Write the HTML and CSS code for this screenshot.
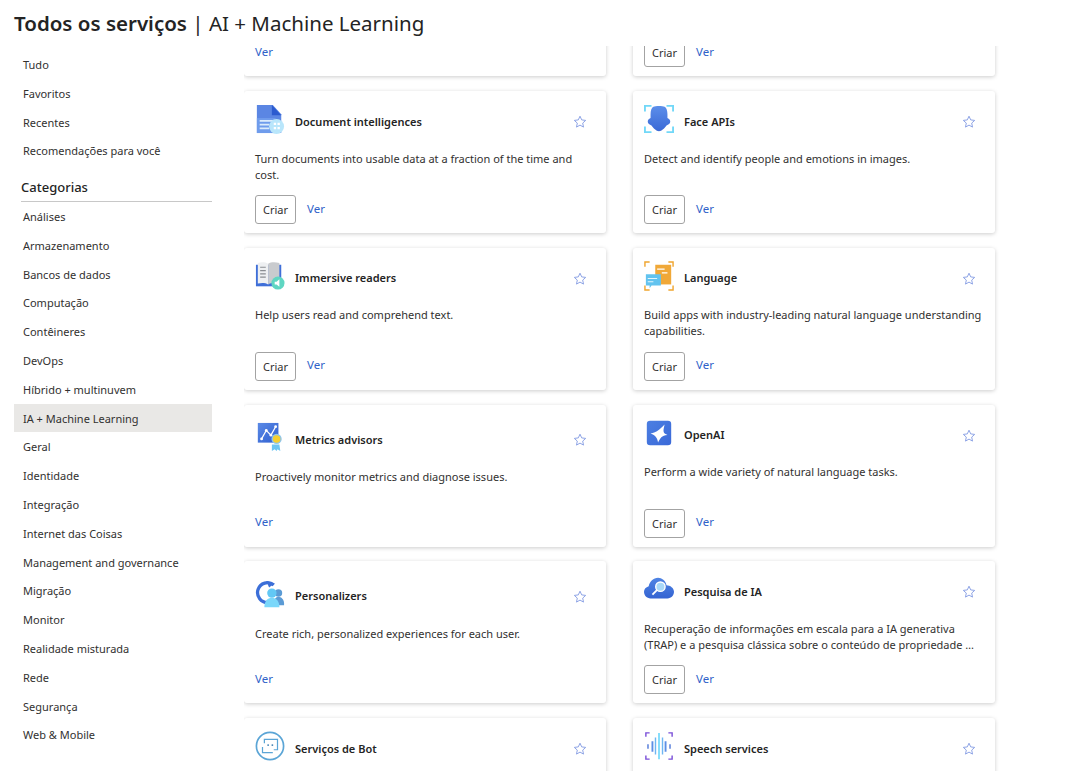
FILE: index.html
```html
<!DOCTYPE html>
<html lang="pt-BR">
<head>
    <meta charset="UTF-8">
    <meta name="viewport" content="width=device-width, initial-scale=1.0">
    <title>Todos os serviços | AI + Machine Learning</title>
    <link rel="stylesheet" href="styles.css">
</head>
<body>
<svg class="sprite" aria-hidden="true">
    <symbol id="star" viewBox="0 0 14 14">
        <path d="M7 1.2l1.7 3.7 4 .5-3 2.7.8 4L7 10.1l-3.500 2 .8-4-3-2.700 4-.5z" fill="none" stroke="currentColor" stroke-width="1"/>
    </symbol>
</svg>

<header class="page-title"><strong>Todos os serviços</strong> | AI + Machine Learning</header>

<div class="layout">
    <nav class="sidebar">
        <a class="nav-item">Tudo</a>
        <a class="nav-item">Favoritos</a>
        <a class="nav-item">Recentes</a>
        <a class="nav-item">Recomendações para você</a>
        <h2 class="nav-heading">Categorias</h2>
        <a class="nav-item">Análises</a>
        <a class="nav-item">Armazenamento</a>
        <a class="nav-item">Bancos de dados</a>
        <a class="nav-item">Computação</a>
        <a class="nav-item">Contêineres</a>
        <a class="nav-item">DevOps</a>
        <a class="nav-item">Híbrido + multinuvem</a>
        <a class="nav-item active">IA + Machine Learning</a>
        <a class="nav-item">Geral</a>
        <a class="nav-item">Identidade</a>
        <a class="nav-item">Integração</a>
        <a class="nav-item">Internet das Coisas</a>
        <a class="nav-item">Management and governance</a>
        <a class="nav-item">Migração</a>
        <a class="nav-item">Monitor</a>
        <a class="nav-item">Realidade misturada</a>
        <a class="nav-item">Rede</a>
        <a class="nav-item">Segurança</a>
        <a class="nav-item">Web &amp; Mobile</a>
    </nav>

    <main class="content">
        <div class="cards">
            <!-- primeira linha: rolada, so o rodape aparece -->
            <section class="card">
                <div class="actions"><a class="link">Ver</a></div>
            </section>
            <section class="card">
                <div class="actions"><button class="button">Criar</button><a class="link">Ver</a></div>
            </section>

            <section class="card">
                <div class="card-head">
                    <svg class="icon" viewBox="0 0 32 32">
                        <path d="M2 1h17l9 10v20H2z" fill="#5b86e3"/>
                        <path d="M18 1l10 11H18z" fill="#2c5bcf"/>
                        <path d="M2 15h20v16H2z" fill="#6f9cec"/>
                        <path d="M5 17h15v2H5zM5 21h10v2H5zM5 25h10v2H5z" fill="#dcebfb"/>
                        <circle cx="23" cy="24" r="8" fill="#b9e6fb"/>
                        <path d="M20 20h2.500v2.500H20zM24 20h2.500v2.500H24zM20 24.500h2.500V27H20zM24 24.500h2.500V27H24z" fill="#fff"/>
                    </svg>
                    <h3 class="card-name">Document intelligences</h3>
                    <svg class="star"><use href="#star"/></svg>
                </div>
                <p class="card-desc">Turn documents into usable data at a fraction of the time and cost.</p>
                <div class="actions"><button class="button">Criar</button><a class="link">Ver</a></div>
            </section>
            <section class="card">
                <div class="card-head">
                    <svg class="icon" viewBox="0 0 32 32">
                        <defs><linearGradient id="faceFill" x1="0" y1="0" x2="0" y2="1"><stop offset="0" stop-color="#5c8eea"/><stop offset="1" stop-color="#3a69d6"/></linearGradient></defs>
                        <path d="M1 8V2h7M24 2h7v6M1 24v6h7M24 30h7v-6" fill="none" stroke="#72d8f8" stroke-width="2"/>
                        <path d="M10 3c2-1 10-1 12 0 2 1 3 4 3 8v4c2 1 3 2 3 4 0 2-2 3-4 4-2 3-5 6-8 6s-6-3-8-6c-2-1-4-2-4-4 0-2 1-3 3-4v-4c0-4 1-7 3-8z" fill="url(#faceFill)"/>
                    </svg>
                    <h3 class="card-name">Face APIs</h3>
                    <svg class="star"><use href="#star"/></svg>
                </div>
                <p class="card-desc">Detect and identify people and emotions in images.</p>
                <div class="actions"><button class="button">Criar</button><a class="link">Ver</a></div>
            </section>

            <section class="card">
                <div class="card-head">
                    <svg class="icon" viewBox="0 0 32 32">
                        <path d="M1 4h27v23H1z" fill="#3f6fd8"/>
                        <path d="M3 2c4-1 8-1 11 1v22c-3-2-7-2-11-1z" fill="#eef0f2"/>
                        <path d="M14 3c3-2 7-2 12-1v22c-5-1-9-1-12 1z" fill="#c9cbce"/>
                        <path d="M5.500 6h6v1.300h-6zM5.500 9.500h6v1.300h-6zM5.500 13h6v1.300h-6zM5.500 16.500h6v1.300h-6z" fill="#8a8d92"/>
                        <circle cx="24.500" cy="23.500" r="7" fill="#5fd6c2"/>
                        <path d="M21 22h2l3-2.500v8L23 25h-2z" fill="#fff"/>
                    </svg>
                    <h3 class="card-name">Immersive readers</h3>
                    <svg class="star"><use href="#star"/></svg>
                </div>
                <p class="card-desc">Help users read and comprehend text.</p>
                <div class="actions"><button class="button">Criar</button><a class="link">Ver</a></div>
            </section>
            <section class="card">
                <div class="card-head">
                    <svg class="icon" viewBox="0 0 32 32">
                        <path d="M1 6V1h5M26 1h5v5M1 26v5h5M26 31h5v-5" fill="none" stroke="#f0a52e" stroke-width="1.500"/>
                        <path d="M12 4h17v21H12z" fill="#f0a838"/>
                        <path d="M14 8h8v1.200h-8zM19 12h6v1.200h-6z" fill="#fff"/>
                        <path d="M2 14h16v12H8l-2 3v-3H2z" fill="#62c3ef"/>
                        <path d="M4 18h10v1.200H4zM4 21.500h6v1.200H4z" fill="#e3f6fd"/>
                    </svg>
                    <h3 class="card-name">Language</h3>
                    <svg class="star"><use href="#star"/></svg>
                </div>
                <p class="card-desc">Build apps with industry-leading natural language understanding capabilities.</p>
                <div class="actions"><button class="button">Criar</button><a class="link">Ver</a></div>
            </section>

            <section class="card">
                <div class="card-head tall">
                    <svg class="icon" viewBox="0 0 32 32">
                        <defs><linearGradient id="metricsFill" x1="0" y1="0" x2="1" y2="1"><stop offset="0" stop-color="#5b8ae6"/><stop offset="1" stop-color="#2f5fd0"/></linearGradient></defs>
                        <path d="M3 1h22v21H3z" fill="url(#metricsFill)"/>
                        <path d="M7 18l5-9 5 5 5-9" fill="none" stroke="#fff" stroke-width="1.300"/>
                        <circle cx="7" cy="18" r="1.500" fill="#fff"/><circle cx="12" cy="9" r="1.500" fill="#fff"/><circle cx="17" cy="14" r="1.500" fill="#fff"/><circle cx="22" cy="5" r="1.500" fill="#fff"/>
                        <path d="M18 24h8l1 7-3-2-1 2-2-2-3 2z" fill="#6ec6f2"/>
                        <circle cx="23" cy="18" r="5.500" fill="#8fc5ea"/>
                        <circle cx="23" cy="18" r="4" fill="#f6cf2f"/>
                    </svg>
                    <h3 class="card-name">Metrics advisors</h3>
                    <svg class="star"><use href="#star"/></svg>
                </div>
                <p class="card-desc">Proactively monitor metrics and diagnose issues.</p>
                <div class="actions"><a class="link">Ver</a></div>
            </section>
            <section class="card">
                <div class="card-head">
                    <svg class="icon" viewBox="0 0 32 32">
                        <defs><linearGradient id="openaiFill" x1="0" y1="0" x2="1" y2="1"><stop offset="0" stop-color="#4c7fe2"/><stop offset="1" stop-color="#3a69d8"/></linearGradient></defs>
                        <rect x="3" y="3" width="26" height="26" rx="3.500" fill="url(#openaiFill)"/>
                        <path d="M22 7c-1 4-1.500 6-1 8 .5 1.500 2 2.500 4 3-3 .5-5 1-6.500 2.500C17 22 16 24 15 26c-.5-3-1.500-5-3-6.500C10.500 18 8.500 17 7 16.500c3-.5 6-1.500 9-4 2-1.500 4-3.500 6-5.500z" fill="#fff"/>
                    </svg>
                    <h3 class="card-name">OpenAI</h3>
                    <svg class="star"><use href="#star"/></svg>
                </div>
                <p class="card-desc">Perform a wide variety of natural language tasks.</p>
                <div class="actions"><button class="button">Criar</button><a class="link">Ver</a></div>
            </section>

            <section class="card">
                <div class="card-head tall">
                    <svg class="icon" viewBox="0 0 32 32">
                        <path d="M20 6.500A10.500 10.500 0 1 0 14 25" fill="none" stroke="#3c6fd8" stroke-width="3.500"/>
                        <path d="M12 2l9 2.500-6 4.500z" fill="#3c6fd8"/>
                        <circle cx="25" cy="15" r="4" fill="#5b9bd5"/>
                        <path d="M20 28c0-6 2-9 5-9s6 3 6 7v2z" fill="#5b9bd5"/>
                        <circle cx="18" cy="15" r="5" fill="#62c8f5"/>
                        <path d="M10 30c0-6 3-10 8-10s8 4 8 10z" fill="#7ad7fa"/>
                    </svg>
                    <h3 class="card-name">Personalizers</h3>
                    <svg class="star"><use href="#star"/></svg>
                </div>
                <p class="card-desc">Create rich, personalized experiences for each user.</p>
                <div class="actions"><a class="link">Ver</a></div>
            </section>
            <section class="card">
                <div class="card-head">
                    <svg class="icon" viewBox="0 0 32 32">
                        <defs><linearGradient id="cloudFill" x1="0" y1="0" x2="0" y2="1"><stop offset="0" stop-color="#4f84e4"/><stop offset="1" stop-color="#3564d2"/></linearGradient></defs>
                        <path d="M7 26c-4 0-7-3-7-7 0-3 2-5 5-6 1-5 5-9 10-9 4 0 8 3 9 8 4 0 8 3 8 7 0 4-3 7-7 7z" fill="url(#cloudFill)"/>
                        <circle cx="17.500" cy="13.500" r="5" fill="#a9d8f8" stroke="#fff" stroke-width="1.500"/>
                        <path d="M14 17l-5 5" stroke="#fff" stroke-width="2"/>
                    </svg>
                    <h3 class="card-name">Pesquisa de IA</h3>
                    <svg class="star"><use href="#star"/></svg>
                </div>
                <p class="card-desc">Recuperação de informações em escala para a IA generativa (TRAP) e a pesquisa clássica sobre o conteúdo de propriedade …</p>
                <div class="actions"><button class="button">Criar</button><a class="link">Ver</a></div>
            </section>

            <section class="card">
                <div class="card-head">
                    <svg class="icon" viewBox="0 0 32 32">
                        <circle cx="16" cy="16" r="14.500" fill="none" stroke="#5ba5d6" stroke-width="1.800"/>
                        <path d="M10 13V9h14v11h-4" fill="none" stroke="#5ba5d6" stroke-width="1.300"/>
                        <path d="M8 17v6h11" fill="none" stroke="#5ba5d6" stroke-width="1.300"/>
                        <circle cx="14" cy="15" r="1" fill="#3f7fb0"/><circle cx="18.500" cy="15" r="1" fill="#3f7fb0"/>
                    </svg>
                    <h3 class="card-name">Serviços de Bot</h3>
                    <svg class="star"><use href="#star"/></svg>
                </div>
            </section>
            <section class="card">
                <div class="card-head">
                    <svg class="icon" viewBox="0 0 32 32">
                        <path d="M2 6V2h4M26 2h4v4M2 26v4h4M26 30h4v-4" fill="none" stroke="#7a4fd8" stroke-width="1.500"/>
                        <path d="M3.500 14h1.500v5H3.500zM27 14h1.500v5H27z" fill="#4f78d8"/>
                        <path d="M8 11h2v11H8zM22 11h2v11h-2z" fill="#5c8fe6"/>
                        <path d="M11.500 7h1.500v18h-1.500zM19 7h1.500v18H19z" fill="#6fb6f2"/>
                        <path d="M15 2h2v28h-2z" fill="#7fdcfb"/>
                    </svg>
                    <h3 class="card-name">Speech services</h3>
                    <svg class="star"><use href="#star"/></svg>
                </div>
            </section>
        </div>
    </main>
</div>
</body>
</html>
```

FILE: styles.css
```css
html, body {
    height: 100%;
}

body {
    margin: 0;
    overflow: hidden;
    display: flex;
    flex-direction: column;
    background: #fff;
    color: #2b2a29;
    font-family: "Noto Sans", "Open Sans", sans-serif;
    font-size: 11px;
}

.sprite {
    display: none;
}

.page-title {
    flex: none;
    height: 46px;
    padding-left: 14px;
    font-size: 20.5px;
    line-height: 47px;
    color: #242424;
    white-space: nowrap;
}

.page-title strong {
    font-weight: 600;
}

.layout {
    flex: 1;
    min-height: 0;
    display: flex;
}

.sidebar {
    flex: none;
    width: 198px;
    margin-left: 14px;
    padding-top: 4px;
}

.nav-item {
    display: block;
    height: 28.8px;
    padding-left: 9px;
    line-height: 30px;
    color: #323130;
}

.nav-item.active {
    background: #e9e8e6;
}

.nav-heading {
    margin: 0 0 0 7px;
    padding: 12.3px 0 3.6px;
    border-bottom: 1px solid #c8c8c8;
    font-size: 13px;
    font-weight: 500;
    line-height: 20px;
    color: #242424;
}

.content {
    flex: 1;
    min-width: 0;
    margin-left: 32px;
    overflow: hidden;
}

.cards {
    display: grid;
    grid-template-columns: 362px 362px;
    grid-auto-rows: 142px;
    column-gap: 27px;
    row-gap: 14.75px;
    margin-top: -111.7px;
    padding-bottom: 20px;
}

.card {
    display: flex;
    flex-direction: column;
    padding: 11px 11px 9px;
    border-radius: 3px;
    background: #fff;
    box-shadow: 0 1px 4px rgba(0, 0, 0, 0.2);
}

.card-head {
    flex: none;
    display: flex;
    align-items: center;
    height: 40px;
}

.card-head.tall {
    box-sizing: border-box;
    height: 45px;
    padding-top: 4px;
}

.icon {
    flex: none;
    width: 30px;
    height: 30px;
    margin-right: 10px;
    margin-bottom: 6px;
}

.card-name {
    flex: 1;
    margin: 0 0 2px;
    font-size: 11px;
    font-weight: 600;
    color: #242424;
}

.star {
    flex: none;
    width: 14px;
    height: 14px;
    margin-right: 8px;
    color: #8ea4e6;
}

.card-desc {
    margin: 8.5px 0 0;
    line-height: 16px;
    color: #323130;
}

.actions {
    display: flex;
    align-items: center;
    gap: 11px;
    height: 29px;
    margin-top: auto;
}

.button {
    width: 41px;
    height: 29px;
    padding: 0;
    border: 1px solid #a3a3a3;
    border-radius: 3px;
    background: #fff;
    font-family: inherit;
    font-size: 11px;
    color: #323130;
}

.link {
    padding-bottom: 3px;
    font-size: 11.5px;
    color: #2f62c9;
}
```
